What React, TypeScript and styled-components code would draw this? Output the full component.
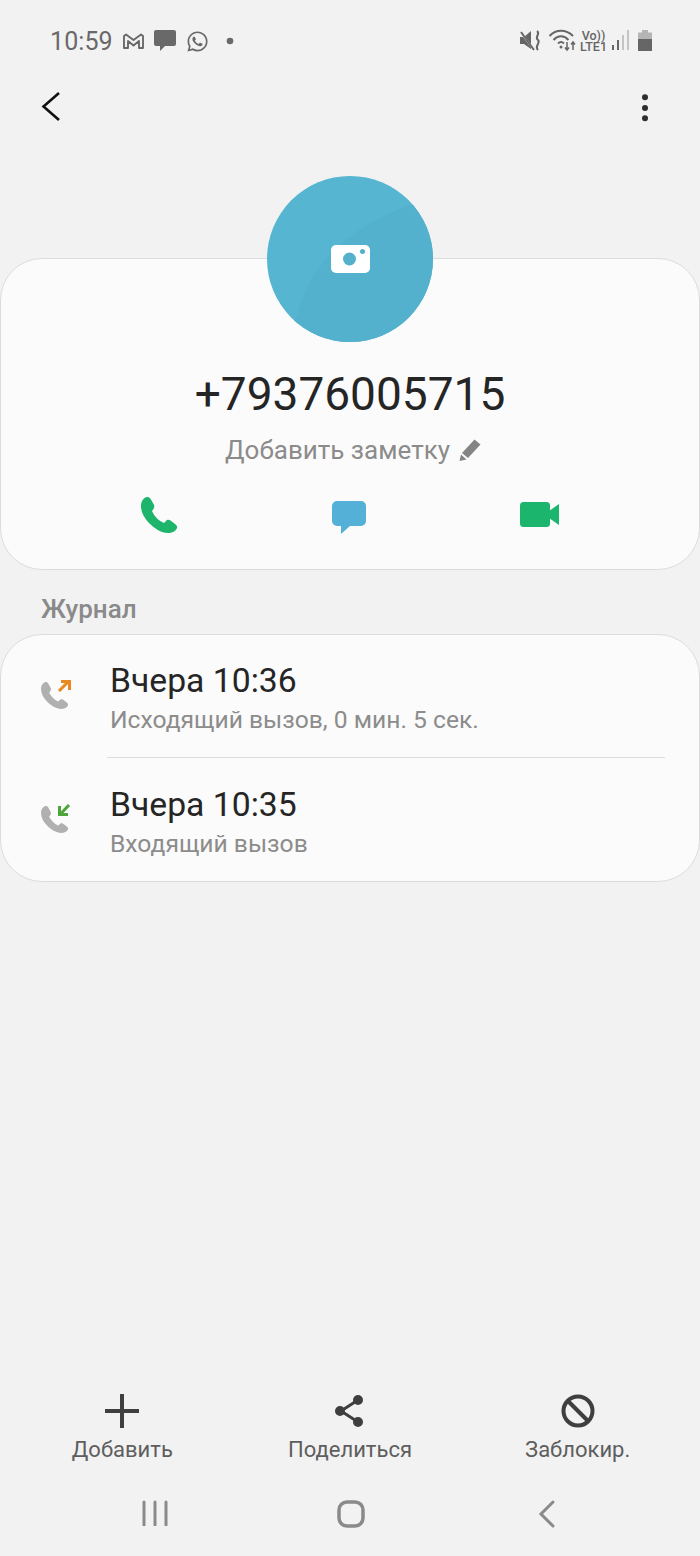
import styled, { createGlobalStyle } from "styled-components";
import { FaWhatsapp } from "react-icons/fa";

const GlobalStyle = createGlobalStyle`
html, body, #root {
  margin: 0;
  padding: 0;
}
* {
  box-sizing: border-box;
}
body {
  background: #f2f2f2;
  font-family: Roboto, "Noto Sans", sans-serif;
}
`;

const Page = styled.div`
  width: 700px;
  height: 1556px;
  display: flex;
  flex-direction: column;
  overflow: hidden;
  background: #f2f2f2;
`;

const StatusBar = styled.div`
  height: 82px;
  padding: 0 48px 0 50px;
  display: flex;
  align-items: center;
  justify-content: space-between;
  color: #696969;
`;

const StatusGroup = styled.div`
  display: flex;
  align-items: center;
`;

const Clock = styled.span`
  font-size: 25px;
  letter-spacing: 0.1px;
  margin-right: 10px;
`;

const Glyph = styled.svg<{ $left?: number; $top?: number }>`
  display: block;
  flex-shrink: 0;
  margin-left: ${p => p.$left ?? 0}px;
  margin-top: ${p => p.$top ?? 0}px;
`;

const WhatsappIcon = styled(FaWhatsapp)`
  margin-left: 10px;
`;

const NetLabel = styled.div`
  width: 31px;
  margin: 0 3px 0 1px;
  font-size: 12.5px;
  line-height: 11.500px;
  font-weight: 500;
  text-align: center;
  color: #666;
`;

const Toolbar = styled.div`
  height: 50px;
  padding: 0 49px 0 40px;
  display: flex;
  align-items: center;
  justify-content: space-between;
`;

const ProfileArea = styled.div`
  margin-top: 44px;
  display: flex;
  flex-direction: column;
  align-items: center;
`;

const Avatar = styled.div`
  width: 166px;
  height: 166px;
  border-radius: 50%;
  margin-bottom: -84px;
  position: relative;
  z-index: 1;
  overflow: hidden;
  display: flex;
  align-items: center;
  justify-content: center;
  background: #56b5d0;
`;

const AvatarShade = styled.svg`
  position: absolute;
  inset: 0;
`;

const CameraGlyph = styled.svg`
  position: relative;
`;

const Card = styled.div<{ $height: number }>`
  width: 700px;
  height: ${p => p.$height}px;
  background: #fbfbfb;
  border: 1px solid #dcdcdc;
  border-radius: 42px;
`;

const ProfileCard = styled(Card)`
  padding-top: 105px;
  display: flex;
  flex-direction: column;
  align-items: center;
`;

const Number = styled.div`
  font-size: 46px;
  line-height: 60px;
  color: #252525;
`;

const NoteRow = styled.div`
  margin: 8px 0 0 6px;
  height: 36px;
  display: flex;
  align-items: center;
  gap: 9px;
  font-size: 26px;
  color: #8b8b8b;
`;

const Actions = styled.div`
  width: 700px;
  margin-top: 27px;
  padding: 0 140px;
  display: flex;
  align-items: center;
  justify-content: space-between;
  height: 40px;
`;

const SectionTitle = styled.div`
  height: 64px;
  padding: 24px 0 0 41px;
  font-size: 26px;
  line-height: 30px;
  font-weight: 500;
  color: #8a8a8a;
`;

const LogRow = styled.div`
  height: 122px;
  padding-top: 4px;
  display: flex;
  align-items: center;

  &:last-child {
    height: 123px;
    padding-top: 6px;
  }
`;

const LogIcon = styled.div`
  width: 109px;
  padding-left: 40px;
  margin-bottom: 7px;
  flex-shrink: 0;
  display: flex;
`;

const LogText = styled.div`
  display: flex;
  flex-direction: column;
  gap: 5px;
`;

const LogTime = styled.div`
  font-size: 33.700px;
  line-height: 38px;
  color: #252525;
`;

const LogKind = styled.div`
  font-size: 24.650px;
  line-height: 30px;
  color: #8c8c8c;
`;

const Divider = styled.div`
  height: 1px;
  margin: 0 34px 0 106px;
  background: #dcdcdc;
`;

const Spacer = styled.div`
  flex: 1;
`;

const BottomBar = styled.div`
  display: flex;
  height: 82px;
  padding: 0 8.500px;
`;

const BottomAction = styled.div`
  flex: 1;
  display: flex;
  flex-direction: column;
  align-items: center;
  font-size: 22px;
  line-height: 30px;
  color: #5e5e5e;
`;

const BottomIcon = styled.div`
  height: 38px;
  margin-bottom: 5px;
  display: flex;
  align-items: center;
  justify-content: center;
`;

const NavBar = styled.div`
  height: 82px;
  padding: 26px 144px 0 142px;
  display: flex;
  justify-content: space-between;
  align-items: flex-start;
`;

const HomeGlyph = styled.svg`
  margin-right: 4px;
`;

const HANDSET =
  "M5 0.300C2 1.500 0 5 0 9C0 15 3 21 8 26C13 31 20 36 27 36C31 36 35 34 36 31C36.500 29.500 35.500 28 34 27L29.500 23.500C27.500 22.200 25.500 23 24.500 24.500L23 26C18 24 13 19 11 14L12.500 12C13.500 10.500 13.500 9 12.800 7.500L9.500 1.800C8.500 0.300 6.500 -0.200 5 0.300Z";

const CallIcon = ({ dir }: { dir: "out" | "in" }) => (
  <svg width="30" height="30" viewBox="0 0 30 30" fill="none">
    <path d={HANDSET} transform="translate(0 2) scale(0.75)" fill="#b0b0b0" />
    {dir === "out" ? (
      <g stroke="#e8891f" strokeWidth="3">
        <path d="M18 11L27 2" />
        <path d="M20 1.500H28.500V10" />
      </g>
    ) : (
      <g stroke="#4ea63a" strokeWidth="3">
        <path d="M28 1L20 9.500" />
        <path d="M18.500 2V10.500H27" />
      </g>
    )}
  </svg>
);

function App() {
  return (
    <Page>
      <GlobalStyle />
      <StatusBar>
        <StatusGroup>
          <Clock>10:59</Clock>
          <svg width="21" height="16" viewBox="0 0 21 16" fill="none" stroke="#696969" strokeWidth="1.900" strokeLinejoin="round">
            <path d="M1 3L3 1.500L10.500 7L18 1.500L20 3V15H16V8L10.500 12.500L5 8V15H1Z" />
          </svg>
          <Glyph $left={10} width="22" height="22" viewBox="0 0 22 22" fill="#696969">
            <path d="M2 0H20A2 2 0 0 1 22 2V14A2 2 0 0 1 20 16H11L6 21V16H2A2 2 0 0 1 0 14V2A2 2 0 0 1 2 0Z" />
          </Glyph>
          <WhatsappIcon size={23} color="#696969" />
          <Glyph $left={17} width="8" height="8" viewBox="0 0 8 8" fill="#696969">
            <circle cx="4" cy="4" r="3.300" />
          </Glyph>
        </StatusGroup>
        <StatusGroup>
          <svg width="22" height="22" viewBox="0 0 22 22" fill="#666">
            <path d="M0 7H4L11 1V19L4 14H0Z" />
            <path d="M0 1L14 20" stroke="#f2f2f2" strokeWidth="2" />
            <path d="M1 2L14 20" stroke="#666" strokeWidth="2" />
            <path d="M17 1C21 4 14 7 18 10C21 13 14 16 18 20" fill="none" stroke="#666" strokeWidth="2" />
          </svg>
          <Glyph $left={7} width="28" height="24" viewBox="0 0 28 24" fill="none" stroke="#666" strokeWidth="2">
            <path d="M0.500 7C7 0 17 0 24 7" />
            <path d="M4.500 11C9 6 15 6 19.500 11" />
            <path d="M9 14.500C11 12.500 13 12.500 15 14.500" />
            <circle cx="12" cy="18" r="1.500" fill="#666" stroke="none" />
            <path d="M18 13V21M16 18.500L18 21L20 18.500M24 21V13M22 15.500L24 13L26 15.500" strokeWidth="1.500" />
          </Glyph>
          <NetLabel>
            Vo))
            <br />
            LTE1
          </NetLabel>
          <svg width="17" height="22" viewBox="0 0 17 22">
            <rect x="0" y="15" width="2" height="5" fill="#666" />
            <rect x="5" y="10" width="2" height="10" fill="#666" />
            <rect x="10" y="5" width="2" height="15" fill="#c4c4c4" />
            <rect x="15" y="0" width="2" height="20" fill="#c4c4c4" />
          </svg>
          <Glyph $left={9} width="14" height="22" viewBox="0 0 14 22">
            <path d="M4 0H10V2.500H14V9H0V2.500H4Z" fill="#b5b5b5" />
            <rect x="0" y="9" width="14" height="12" fill="#666" />
          </Glyph>
        </StatusGroup>
      </StatusBar>

      <Toolbar>
        <svg width="22" height="32" viewBox="0 0 22 32" fill="none" stroke="#111" strokeWidth="2.600">
          <path d="M19 2L3.500 15.500L19 29" />
        </svg>
        <svg width="12" height="34" viewBox="0 0 12 34" fill="#2e2e2e">
          <circle cx="6" cy="7.300" r="3" />
          <circle cx="6" cy="18" r="3" />
          <circle cx="6" cy="28.300" r="3" />
        </svg>
      </Toolbar>

      <ProfileArea>
        <Avatar>
          <AvatarShade width="166" height="166" viewBox="0 0 166 166">
            <path d="M30 142C38 95 80 45 166 22V166H0Z" fill="#54b1cd" />
          </AvatarShade>
          <CameraGlyph width="39" height="28" viewBox="0 0 39 28">
            <rect width="39" height="28" rx="5" fill="#fff" />
            <circle cx="18.500" cy="14" r="6.500" fill="#55b0cc" />
            <circle cx="31.500" cy="6.500" r="2.500" fill="#55b0cc" />
          </CameraGlyph>
        </Avatar>
        <ProfileCard $height={312}>
          <Number>+79376005715</Number>
          <NoteRow>
            Добавить заметку
            <svg width="22" height="22" viewBox="0 0 22 22" fill="#848484">
              <path d="M15.500 0.500L21.500 5.500L9 19L3 14Z" />
              <path d="M2 15.500L7.500 20.500L0.500 22Z" />
            </svg>
          </NoteRow>
          <Actions>
            <Glyph $left={1} width="37" height="37" viewBox="0 0 37 37" fill="#1db46c">
              <path d={HANDSET} />
            </Glyph>
            <Glyph $top={6} width="36" height="36" viewBox="0 0 36 36" fill="#55b0d8">
              <path d="M6 1H30A5 5 0 0 1 35 6V21A5 5 0 0 1 30 26H19L10 34V26H6A5 5 0 0 1 1 21V6A5 5 0 0 1 6 1Z" />
            </Glyph>
            <svg width="40" height="26" viewBox="0 0 40 26" fill="#1cb56e">
              <rect x="0" y="0" width="30" height="25" rx="3.500" />
              <path d="M29 9L39 2V23L29 16Z" />
            </svg>
          </Actions>
        </ProfileCard>
      </ProfileArea>

      <SectionTitle>Журнал</SectionTitle>
      <Card $height={248}>
        <LogRow>
          <LogIcon>
            <CallIcon dir="out" />
          </LogIcon>
          <LogText>
            <LogTime>Вчера 10:36</LogTime>
            <LogKind>Исходящий вызов, 0 мин. 5 сек.</LogKind>
          </LogText>
        </LogRow>
        <Divider />
        <LogRow>
          <LogIcon>
            <CallIcon dir="in" />
          </LogIcon>
          <LogText>
            <LogTime>Вчера 10:35</LogTime>
            <LogKind>Входящий вызов</LogKind>
          </LogText>
        </LogRow>
      </Card>

      <Spacer />

      <BottomBar>
        <BottomAction>
          <BottomIcon>
            <svg width="36" height="36" viewBox="0 0 36 36" stroke="#3f3f3f" strokeWidth="4">
              <path d="M18 1V35M1 18H35" />
            </svg>
          </BottomIcon>
          Добавить
        </BottomAction>
        <BottomAction>
          <BottomIcon>
            <svg width="32" height="36" viewBox="0 0 32 36" fill="#3f3f3f" stroke="#3f3f3f" strokeWidth="3">
              <path d="M24 7L7 18L24 29" fill="none" />
              <circle cx="24" cy="7" r="3.500" />
              <circle cx="6" cy="18" r="3.500" />
              <circle cx="24" cy="29" r="3.500" />
            </svg>
          </BottomIcon>
          Поделиться
        </BottomAction>
        <BottomAction>
          <BottomIcon>
            <svg width="34" height="34" viewBox="0 0 34 34" fill="none" stroke="#3f3f3f" strokeWidth="4">
              <circle cx="17" cy="17" r="14.500" />
              <path d="M7 7L27 27" />
            </svg>
          </BottomIcon>
          Заблокир.
        </BottomAction>
      </BottomBar>

      <NavBar>
        <svg width="26" height="26" viewBox="0 0 26 26" stroke="#8a8a8a" strokeWidth="3" strokeLinecap="round">
          <path d="M2 2V25M13 2V25M24 2V25" />
        </svg>
        <HomeGlyph width="28" height="28" viewBox="0 0 28 28" fill="none" stroke="#8a8a8a" strokeWidth="3.500">
          <rect x="2" y="2" width="24" height="24" rx="8" />
        </HomeGlyph>
        <svg width="18" height="28" viewBox="0 0 18 28" fill="none" stroke="#8a8a8a" strokeWidth="3" strokeLinecap="round">
          <path d="M15 2L3 14L15 26" />
        </svg>
      </NavBar>
    </Page>
  );
}

export default App;
